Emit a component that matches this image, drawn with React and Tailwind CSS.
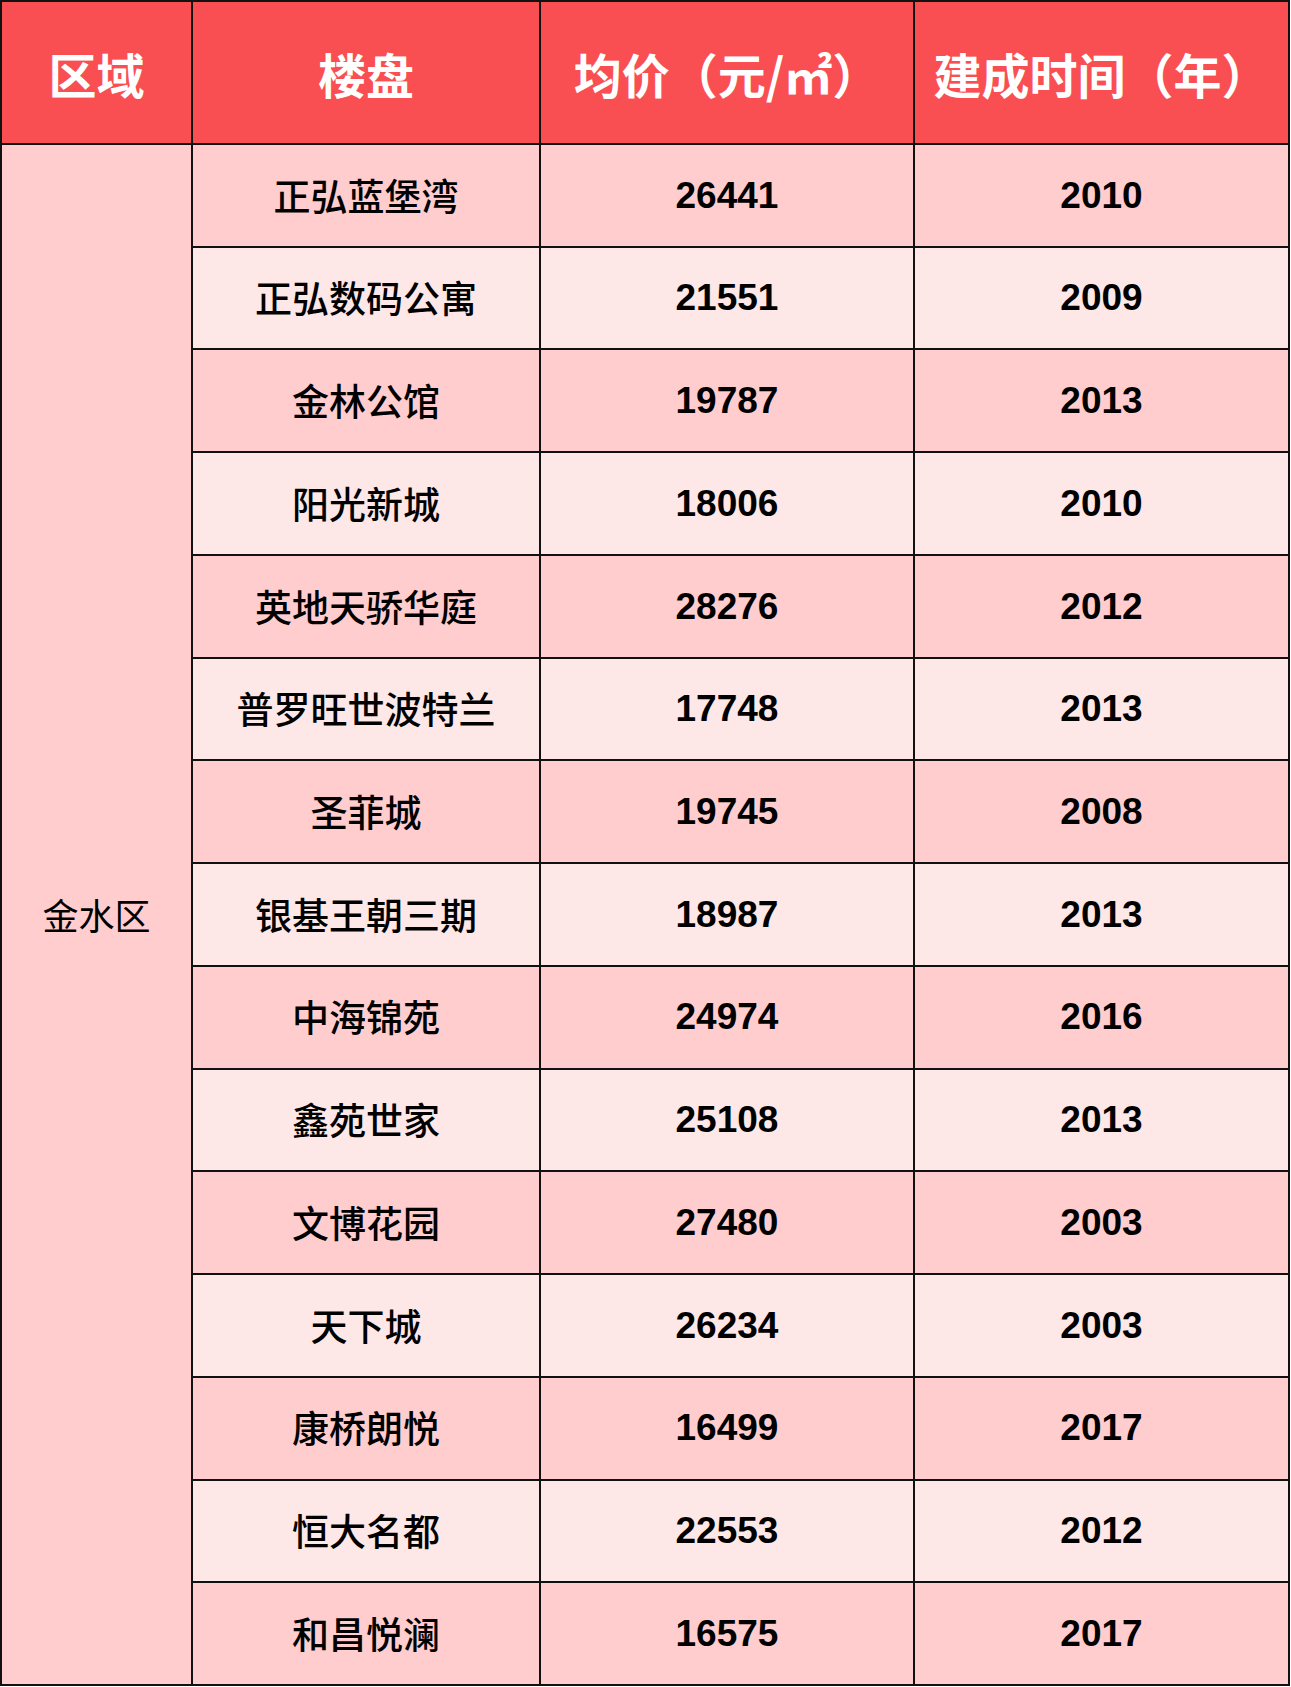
const rows = [
  ["正弘蓝堡湾", "26441", "2010"],
  ["正弘数码公寓", "21551", "2009"],
  ["金林公馆", "19787", "2013"],
  ["阳光新城", "18006", "2010"],
  ["英地天骄华庭", "28276", "2012"],
  ["普罗旺世波特兰", "17748", "2013"],
  ["圣菲城", "19745", "2008"],
  ["银基王朝三期", "18987", "2013"],
  ["中海锦苑", "24974", "2016"],
  ["鑫苑世家", "25108", "2013"],
  ["文博花园", "27480", "2003"],
  ["天下城", "26234", "2003"],
  ["康桥朗悦", "16499", "2017"],
  ["恒大名都", "22553", "2012"],
  ["和昌悦澜", "16575", "2017"],
];

const cjk = "font-['Noto_Sans_CJK_SC',sans-serif]";
const num = "font-['Liberation_Sans','Noto_Sans_CJK_SC',sans-serif]";

export default function App() {
  return (
    <div className="min-h-screen bg-white">
      <div className="grid h-[1686px] w-[1290px] grid-cols-[189px_346px_372px_373px] grid-rows-[141px_repeat(15,1fr)] gap-[2px] bg-[#111] p-[2px]">
        {["区域", "楼盘", "均价（元/㎡）", "建成时间（年）"].map((h) => (
          <div
            key={h}
            className={`flex items-center justify-center bg-[#f94f52] text-[48px] font-bold text-white ${cjk}`}
          >
            {h}
          </div>
        ))}

        <div
          className={`row-span-15 flex items-center justify-center bg-[#ffcdcd] text-[36px] text-black ${cjk}`}
        >
          金水区
        </div>

        {rows.map(([name, price, year], i) => {
          const bg = i % 2 === 0 ? "bg-[#ffcdcd]" : "bg-[#fde7e7]";
          return [
            <div
              key={name}
              className={`flex items-center justify-center ${bg} text-[37px] font-medium text-black ${cjk}`}
            >
              {name}
            </div>,
            <div
              key={name + "p"}
              className={`flex items-center justify-center ${bg} text-[37px] font-bold text-black ${num}`}
            >
              {price}
            </div>,
            <div
              key={name + "y"}
              className={`flex items-center justify-center ${bg} text-[37px] font-bold text-black ${num}`}
            >
              {year}
            </div>,
          ];
        })}
      </div>
    </div>
  );
}
